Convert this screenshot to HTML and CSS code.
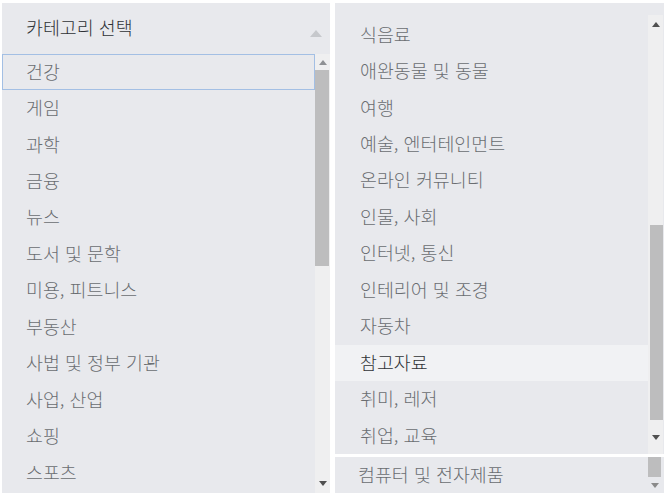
FILE: index.html
```html
<!DOCTYPE html>
<html lang="ko">
<head>
<meta charset="utf-8">
<title>카테고리 선택</title>
<link rel="stylesheet" href="styles.css">
</head>
<body>
<div class="page">
  <section class="panel left">
    <div class="header">
      <span class="header-text">카테고리 선택</span>
      <span class="tri-up header-tri"></span>
    </div>
    <div class="listwrap">
      <ul class="list">
        <li class="item focused">건강</li>
        <li class="item">게임</li>
        <li class="item">과학</li>
        <li class="item">금융</li>
        <li class="item">뉴스</li>
        <li class="item">도서 및 문학</li>
        <li class="item">미용, 피트니스</li>
        <li class="item">부동산</li>
        <li class="item">사법 및 정부 기관</li>
        <li class="item">사업, 산업</li>
        <li class="item">쇼핑</li>
        <li class="item">스포츠</li>
      </ul>
      <div class="scrollbar sb-left">
        <div class="sb-btn sb-btn-top"><span class="arrow up light"></span></div>
        <div class="thumb thumb-left"></div>
        <div class="track-fill"></div>
        <div class="sb-btn sb-btn-bottom"><span class="arrow down"></span></div>
      </div>
    </div>
  </section>
  <section class="right-col">
    <div class="panel upper">
      <ul class="list rlist">
        <li class="item">식음료</li>
        <li class="item">애완동물 및 동물</li>
        <li class="item">여행</li>
        <li class="item">예술, 엔터테인먼트</li>
        <li class="item">온라인 커뮤니티</li>
        <li class="item">인물, 사회</li>
        <li class="item">인터넷, 통신</li>
        <li class="item">인테리어 및 조경</li>
        <li class="item">자동차</li>
        <li class="item hover">참고자료</li>
        <li class="item">취미, 레저</li>
        <li class="item">취업, 교육</li>
      </ul>
      <div class="scrollbar sb-right">
        <div class="sb-btn sb-btn-top"><span class="arrow up"></span></div>
        <div class="track-fill"></div>
        <div class="thumb thumb-right"></div>
        <div class="sb-btn sb-btn-bottom"><span class="arrow down"></span></div>
      </div>
    </div>
    <div class="panel lower">
      <div class="item lower-item">컴퓨터 및 전자제품</div>
      <div class="scrollbar sb-lower">
        <div class="thumb thumb-lower"></div>
        <div class="sb-btn sb-btn-bottom"><span class="arrow down light2"></span></div>
      </div>
    </div>
  </section>
</div>
</body>
</html>
```

FILE: styles.css
```css
* { box-sizing: border-box; }
html, body { margin: 0; padding: 0; background: #ffffff; }
body {
  font-family: "Noto Sans CJK KR", "Noto Sans", sans-serif;
  font-size: 18.4px;
  font-weight: 300;
  color: #6a6d71;
}
ul { list-style: none; margin: 0; padding: 0; }

.page {
  display: flex;
  gap: 5px;
  padding: 3px 3px 3px 2px;
  height: 496px;
}

.panel { background: #e8e9ed; }

.left {
  width: 328px;
  height: 490px;
  display: flex;
  flex-direction: column;
}

.header {
  height: 51px;
  display: flex;
  align-items: center;
  justify-content: space-between;
  padding: 0 8px 3px 24px;
}
.header-text { color: #2f3236; }

.tri-up {
  width: 0; height: 0;
  border-left: 6px solid transparent;
  border-right: 6px solid transparent;
  border-bottom: 7px solid #c6c8cc;
}
.header-tri { margin-top: 12px; }

.listwrap {
  flex: 1;
  display: flex;
  overflow: hidden;
}
.list { flex: 1; }

.item {
  height: 36.45px;
  display: flex;
  align-items: center;
  padding-left: 24px;
  padding-bottom: 3px;
  white-space: nowrap;
}
.focused {
  border: 1px solid #a3bfe4;
  padding-left: 23px;
  padding-bottom: 2px;
}

.scrollbar {
  display: flex;
  flex-direction: column;
  background: #efeff0;
}
.sb-left { width: 15px; }
.sb-btn {
  display: flex;
  align-items: center;
  justify-content: center;
}
.sb-left .sb-btn-top { height: 16px; }
.sb-left .sb-btn-bottom { height: 19px; }
.track-fill { flex: 1; }
.thumb { background: #bdbdbe; }
.thumb-left { height: 196px; margin: 0 1px 0 0; }

.arrow {
  width: 0; height: 0;
  border-left: 4px solid transparent;
  border-right: 4px solid transparent;
}
.arrow.up { border-bottom: 5px solid #505050; }
.arrow.down { border-top: 5px solid #505050; }
.arrow.up.light { border-bottom-color: #8f9194; }
.arrow.down.light2 { border-top-color: #8a8a8a; }

.right-col {
  width: 329px;
  display: flex;
  flex-direction: column;
  gap: 3px;
}
.upper {
  height: 451px;
  display: flex;
}
.rlist { padding-top: 14px; }
.rlist .item { padding-left: 25px; }
.hover { background: #f1f2f4; color: #2f3236; }

.sb-right {
  width: 15px;
  margin: 12px 1px 0 0;
}
.sb-right .sb-btn-top { height: 18px; }
.sb-right .track-fill { flex: 0 0 192px; }
.thumb-right { height: 195px; margin-left: 2px; }
.sb-right .sb-btn-bottom { flex: 1; }

.lower {
  height: 36px;
  display: flex;
  justify-content: space-between;
}
.lower-item { height: 36px; padding-left: 23px; }
.sb-lower {
  width: 13px;
  margin-right: 3px;
  background: #e8e9ed;
}
.thumb-lower { height: 20px; }
.sb-lower .sb-btn-bottom { flex: 1; }
```
